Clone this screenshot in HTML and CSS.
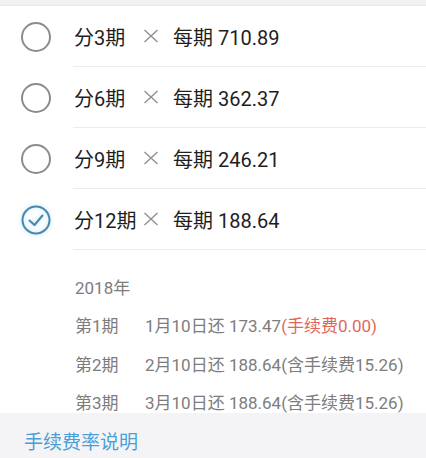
FILE: index.html
```html
<!DOCTYPE html>
<html lang="zh-CN">
<head>
<meta charset="utf-8">
<title>分期</title>
<link rel="stylesheet" href="styles.css">
</head>
<body>
<div class="page">
  <div class="content">
    <div class="topband"></div>
    <div class="options">
      <div class="opt">
        <div class="radio"><svg width="34" height="34" viewBox="-17 -17 34 34"><circle r="14" fill="none" stroke="#8c8c8c" stroke-width="2"/></svg></div>
        <div class="label">
          <span class="term">分3期</span>
          <svg class="times" width="16" height="14" viewBox="0 0 16 14"><path d="M1.5 1 L14.5 13 M14.5 1 L1.5 13" stroke="#909090" stroke-width="1.4" fill="none"/></svg>
          <span class="per">每期 710.89</span>
        </div>
      </div>
      <div class="opt">
        <div class="radio"><svg width="34" height="34" viewBox="-17 -17 34 34"><circle r="14" fill="none" stroke="#8c8c8c" stroke-width="2"/></svg></div>
        <div class="label">
          <span class="term">分6期</span>
          <svg class="times" width="16" height="14" viewBox="0 0 16 14"><path d="M1.5 1 L14.5 13 M14.5 1 L1.5 13" stroke="#909090" stroke-width="1.4" fill="none"/></svg>
          <span class="per">每期 362.37</span>
        </div>
      </div>
      <div class="opt">
        <div class="radio"><svg width="34" height="34" viewBox="-17 -17 34 34"><circle r="14" fill="none" stroke="#8c8c8c" stroke-width="2"/></svg></div>
        <div class="label">
          <span class="term">分9期</span>
          <svg class="times" width="16" height="14" viewBox="0 0 16 14"><path d="M1.5 1 L14.5 13 M14.5 1 L1.5 13" stroke="#909090" stroke-width="1.4" fill="none"/></svg>
          <span class="per">每期 246.21</span>
        </div>
      </div>
      <div class="opt">
        <div class="radio"><svg class="checked" width="34" height="34" viewBox="-17 -17 34 34"><circle r="13.5" fill="none" stroke="#4a86ad" stroke-width="2"/><path d="M-6.5 0.5 L-1.5 5 L6.5 -4.5" fill="none" stroke="#4a86ad" stroke-width="2" stroke-linecap="round" stroke-linejoin="round"/></svg></div>
        <div class="label">
          <span class="term">分12期</span>
          <svg class="times" width="16" height="14" viewBox="0 0 16 14"><path d="M1.5 1 L14.5 13 M14.5 1 L1.5 13" stroke="#909090" stroke-width="1.4" fill="none"/></svg>
          <span class="per">每期 188.64</span>
        </div>
      </div>
    </div>
    <div class="details">
      <div class="year">2018年</div>
      <div class="line"><span class="no">第1期</span><span>1月10日还 173.47<span class="fee">(手续费0.00)</span></span></div>
      <div class="line"><span class="no">第2期</span><span>2月10日还 188.64(含手续费15.26)</span></div>
      <div class="line"><span class="no">第3期</span><span>3月10日还 188.64(含手续费15.26)</span></div>
    </div>
  </div>
  <div class="footer">手续费率说明</div>
</div>
</body>
</html>
```
FILE: styles.css
```css
html, body {
  margin: 0;
  padding: 0;
  background: #ffffff;
}
body {
  font-family: Roboto, "Noto Sans CJK SC", sans-serif;
}
.page {
  width: 426px;
  height: 458px;
  display: flex;
  flex-direction: column;
  overflow: hidden;
}
.content {
  height: 413px;
  overflow: hidden;
  flex: none;
}
.topband {
  height: 5px;
  background: #f2f2f2;
  border-bottom: 1px solid #e9e9e9;
}
.opt {
  display: flex;
  height: 61px;
}
.radio {
  width: 73px;
  display: flex;
  align-items: center;
  justify-content: center;
  padding-right: 2px;
  box-sizing: border-box;
}
.checked {
  filter: drop-shadow(0 0 2px rgba(120, 200, 240, 0.55));
}
.label {
  flex: 1;
  display: flex;
  align-items: center;
  border-bottom: 1px solid #ececec;
  font-size: 20px;
  color: #1e1e1e;
  padding-left: 1px;
}
.term {
  width: 69px;
  flex: none;
}
.times {
  flex: none;
  margin-right: 14px;
}
.details {
  display: flex;
  flex-direction: column;
  gap: 21.5px;
  padding: 29.5px 0 0 75px;
  font-size: 17px;
  line-height: 17px;
  color: #7d7d7d;
}
.line {
  display: flex;
}
.no {
  width: 70px;
  flex: none;
}
.fee {
  color: #e0675c;
}
.footer {
  flex: 1;
  background: #f4f4f6;
  color: #4a9fd6;
  font-size: 19px;
  line-height: 22px;
  padding: 17px 0 0 24px;
  font-family: "Noto Sans CJK SC", sans-serif;
}
```
